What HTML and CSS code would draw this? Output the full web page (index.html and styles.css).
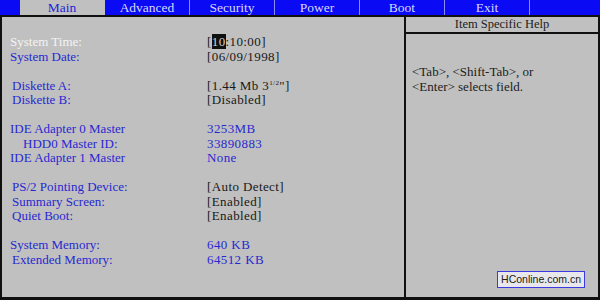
FILE: index.html
```html
<!DOCTYPE html>
<html>
  <head>
    <title>BIOS Setup Utility</title>
    <link rel="stylesheet" href="styles.css">
  </head>
  <body>
    <ul class="menu">
      <li class="active">Main</li>
      <li>Advanced</li>
      <li>Security</li>
      <li>Power</li>
      <li>Boot</li>
      <li>Exit</li>
    </ul>
    <div class="screen">
      <div class="fields">
        <div class="row current"><span class="label">System Time:</span><span class="value">[<b class="cursor">10</b>:10:00]</span></div>
        <div class="row"><span class="label">System Date:</span><span class="value">[06/09/1998]</span></div>
        <div class="gap"></div>
        <div class="row"><span class="label in1">Diskette A:</span><span class="value">[1.44 Mb 3<sup>1/2</sup>"]</span></div>
        <div class="row"><span class="label in1">Diskette B:</span><span class="value">[Disabled]</span></div>
        <div class="gap"></div>
        <div class="row"><span class="label">IDE Adapter 0 Master</span><span class="value info">3253MB</span></div>
        <div class="row"><span class="label in2">HDD0 Master ID:</span><span class="value info">33890883</span></div>
        <div class="row"><span class="label">IDE Adapter 1 Master</span><span class="value info">None</span></div>
        <div class="gap"></div>
        <div class="row"><span class="label in1">PS/2 Pointing Device:</span><span class="value">[Auto Detect]</span></div>
        <div class="row"><span class="label in1">Summary Screen:</span><span class="value">[Enabled]</span></div>
        <div class="row"><span class="label in1">Quiet Boot:</span><span class="value">[Enabled]</span></div>
        <div class="gap"></div>
        <div class="row"><span class="label">System Memory:</span><span class="value info">640 KB</span></div>
        <div class="row"><span class="label in1">Extended Memory:</span><span class="value info">64512 KB</span></div>
      </div>
      <div class="help">
        <div class="help-title">Item Specific Help</div>
        <p class="help-text">&lt;Tab&gt;, &lt;Shift-Tab&gt;, or<br>&lt;Enter&gt; selects field.</p>
      </div>
      <div class="mark">HConline.com.cn</div>
    </div>
  </body>
</html>
```
FILE: styles.css
```css
body { margin: 0; width: 600px; height: 300px; overflow: hidden; background: #c0c0c0; font-family: "Liberation Serif", "Times New Roman", serif; font-size: 13px; color: #202020; }

.menu { list-style: none; margin: 0; padding: 0 0 0 20px; height: 15px; display: flex; background: #0a0af5; }
.menu li { width: 85px; height: 15px; line-height: 15px; text-align: center; color: #d8d8ff; border-right: 1px solid #8c8cff; box-sizing: border-box; font-size: 13.5px; }
.menu li.active { background: #c0c0c0; color: #2424d8; border-right-color: #c0c0c0; }

.screen { position: relative; display: flex; height: 285px; box-sizing: border-box; border: solid #101010; border-width: 2px 2px 3px 2px; }

.fields { flex: 1; padding: 18px 0 0 8px; }
.row { display: flex; height: 14.5px; line-height: 14.5px; }
.gap { height: 14.5px; }
.label { width: 197px; color: #2828d0; }
.label.in1 { padding-left: 2px; width: 195px; }
.label.in2 { padding-left: 13px; width: 184px; }
.current .label { color: #f4f4f4; }
.value { color: #181818; letter-spacing: 0.4px; }
.value.info { color: #2828d0; }
.cursor { font-weight: normal; background: #101010; color: #d0d0d0; }
sup { font-size: 7px; line-height: 0; }

.help { width: 192px; border-left: 2px solid #101010; }
.help-title { height: 15px; line-height: 15px; text-align: center; border-bottom: 2px solid #101010; font-size: 12.5px; }
.help-text { margin: 31px 0 0 6px; line-height: 14.5px; }

.mark { position: absolute; right: 13px; bottom: 9px; padding: 0 3px; height: 15px; line-height: 15px; border: 1px solid #3a3ae0; background: #e8e8ec; font-family: "Liberation Sans", Arial, sans-serif; font-size: 10.5px; color: #202020; }
```
